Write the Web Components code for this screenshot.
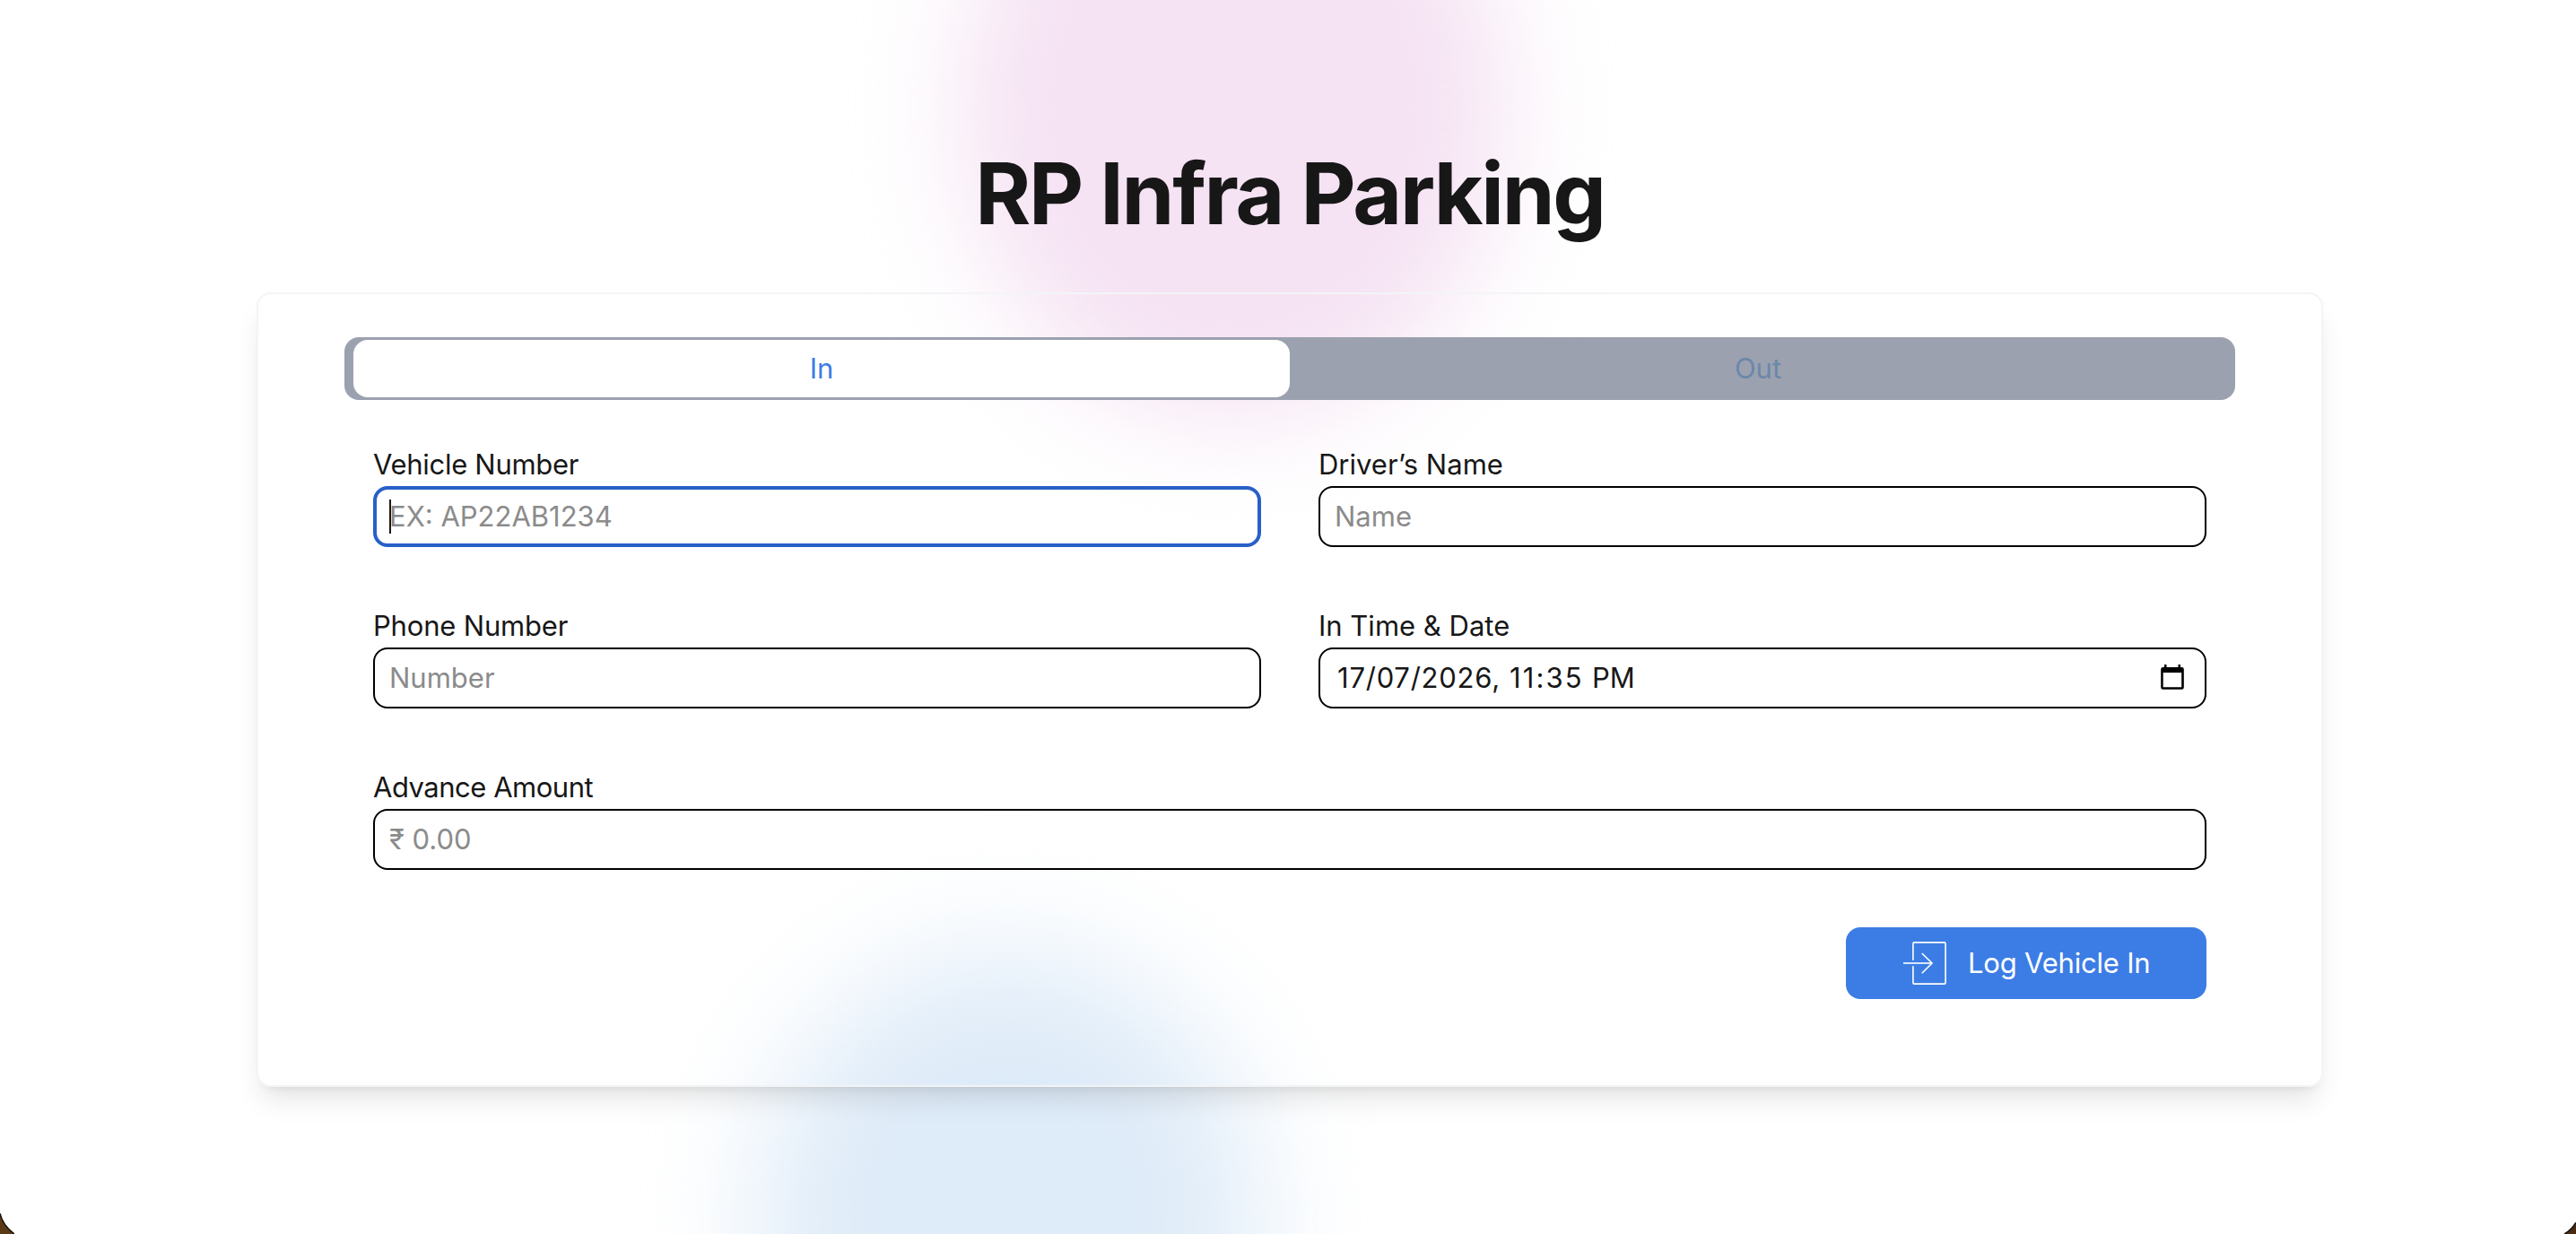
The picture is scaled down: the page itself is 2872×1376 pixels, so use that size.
<!DOCTYPE html>
<html lang="en">
<head>
  <meta charset="utf-8">
  <title>RP Infra Parking</title>
  <style>
    body {
      margin: 0;
      background: #ffffff;
      color: #171717;
      font: 31px/48px Inter, "Liberation Sans", sans-serif;
    }
  </style>
</head>
<body>
  <parking-page heading="RP Infra Parking">
    <parking-card>
      <tab-switch slot="tabs" tabs='["In", "Out"]' active="0"></tab-switch>
      <form-field label="Vehicle Number" placeholder="EX: AP22AB1234" focused style="--label-spacing: -0.3px"></form-field>
      <form-field label="Driver’s Name" placeholder="Name"></form-field>
      <form-field label="Phone Number" placeholder="Number" style="--label-spacing: -0.18px"></form-field>
      <form-field label="In Time &amp; Date"><date-value date="17/07/2026" time="11:35" period="PM"></date-value></form-field>
      <form-field label="Advance Amount" placeholder="₹ 0.00" wide style="--label-spacing: -0.48px"></form-field>
      <log-button slot="actions">Log Vehicle In</log-button>
    </parking-card>
  </parking-page>

  <script>
    class ParkingPage extends HTMLElement {
      constructor() {
        super();
        this.attachShadow({ mode: "open" });
        this.shadowRoot.innerHTML = `
          <style>
            :host {
              display: flex;
              flex-direction: column;
              align-items: center;
              position: relative;
              box-sizing: border-box;
              height: 1376px;
              padding: 168px 0 0 4px;
              overflow: hidden;
              isolation: isolate;
            }
            h1 {
              margin: 0 0 62px;
              font-size: 94.5px;
              line-height: 96px;
              font-weight: 700;
              letter-spacing: -2.2px;
            }
            .glow {
              position: absolute;
              z-index: -1;
              border-radius: 50%;
            }
            .pink {
              left: 1074px;
              top: -220px;
              width: 604px;
              height: 686px;
              background: #f5e2f3;
              filter: blur(60px);
            }
            .blue {
              left: 846px;
              top: 1062px;
              width: 556px;
              height: 600px;
              background: #deebf8;
              filter: blur(66px);
            }
            .corner {
              position: absolute;
              bottom: 0;
              width: 16px;
              height: 23px;
            }
            .left { left: 0; }
            .right { right: 0; width: 13px; height: 13px; }
          </style>
          <div class="glow pink"></div>
          <div class="glow blue"></div>
          <h1></h1>
          <slot></slot>
          <svg class="corner left" viewBox="0 0 16 23">
            <path d="M0 0C2 9 8 17 16 23H0Z" fill="#5d3a17"/>
            <path d="M0 0C2 9 8 17 16 23" fill="none" stroke="#1c150e" stroke-width="1.5"/>
          </svg>
          <svg class="corner right" viewBox="0 0 13 13">
            <path d="M13 0C10 5 5 10 0 13H13Z" fill="#4a2a12"/>
            <path d="M13 0C10 5 5 10 0 13" fill="none" stroke="#1c150e" stroke-width="1.5"/>
          </svg>
        `;
      }

      connectedCallback() {
        this.shadowRoot.querySelector("h1").textContent = this.getAttribute("heading");
      }
    }

    class ParkingCard extends HTMLElement {
      constructor() {
        super();
        this.attachShadow({ mode: "open" });
        this.shadowRoot.innerHTML = `
          <style>
            :host {
              display: block;
              box-sizing: border-box;
              width: 2304px;
              height: 886px;
              padding: 48px 96px 0;
              border: 2px solid #f3f4f6;
              border-radius: 16px;
              box-shadow: 0 20px 30px -6px rgba(0, 0, 0, 0.1), 0 8px 12px -8px rgba(0, 0, 0, 0.1);
            }
            .fields {
              display: grid;
              grid-template-columns: 1fr 1fr;
              gap: 64px;
              padding: 48px 32px 64px;
            }
            .actions {
              display: flex;
              justify-content: flex-end;
              padding: 0 32px;
            }
          </style>
          <slot name="tabs"></slot>
          <div class="fields"><slot></slot></div>
          <div class="actions"><slot name="actions"></slot></div>
        `;
      }
    }

    class TabSwitch extends HTMLElement {
      constructor() {
        super();
        this.attachShadow({ mode: "open" });
        this.shadowRoot.innerHTML = `
          <style>
            :host {
              display: grid;
              grid-auto-flow: column;
              grid-auto-columns: 1fr;
              box-sizing: border-box;
              height: 70px;
              padding: 3px 10px;
              border-radius: 16px;
              background: #9ca1af;
            }
            .tab {
              display: flex;
              align-items: center;
              justify-content: center;
              border-radius: 16px;
              color: #6b88a9;
              cursor: pointer;
            }
            .tab__active {
              background: #ffffff;
              color: #3c7de5;
            }
          </style>
        `;
      }

      connectedCallback() {
        this._active = Number(this.getAttribute("active"));
        JSON.parse(this.getAttribute("tabs")).forEach((label, index) => {
          const tab = document.createElement("div");
          tab.className = "tab";
          tab.textContent = label;
          tab.addEventListener("click", () => this._select(index));
          this.shadowRoot.appendChild(tab);
        });
        this._select(this._active);
      }

      _select(index) {
        this.shadowRoot.querySelectorAll(".tab").forEach((tab, i) => {
          tab.classList.toggle("tab__active", i === index);
        });
      }
    }

    class FormField extends HTMLElement {
      constructor() {
        super();
        this.attachShadow({ mode: "open" });
        this.shadowRoot.innerHTML = `
          <style>
            :host { display: block; }
            :host([wide]) { grid-column: 1 / -1; }
            .label { letter-spacing: var(--label-spacing, 0); }
            .box {
              display: flex;
              align-items: center;
              box-sizing: border-box;
              height: 68px;
              padding: 0 16px;
              border: 2px solid #000000;
              border-radius: 16px;
            }
            .placeholder { color: #8b8b8b; }
            .caret {
              display: none;
              width: 2px;
              height: 38px;
              margin-right: -2px;
              background: #171717;
            }
            :host([focused]) .box {
              padding: 0 14px;
              border: 4px solid #2860c8;
            }
            :host([focused]) .caret { display: block; }
            ::slotted(*) { flex: 1; }
          </style>
          <div class="label"></div>
          <div class="box">
            <span class="caret"></span>
            <span class="placeholder"></span>
            <slot></slot>
          </div>
        `;
      }

      connectedCallback() {
        this.shadowRoot.querySelector(".label").textContent = this.getAttribute("label");
        this.shadowRoot.querySelector(".placeholder").textContent = this.getAttribute("placeholder") || "";
      }
    }

    class DateValue extends HTMLElement {
      constructor() {
        super();
        this.attachShadow({ mode: "open" });
      }

      connectedCallback() {
        this.shadowRoot.innerHTML = `
          <style>
            :host {
              display: flex;
              align-items: center;
              padding: 0 7px 0 3px;
            }
            .date {
              width: 192px;
              letter-spacing: 0.77px;
            }
            .time {
              width: 92px;
              letter-spacing: 2.1px;
            }
            svg {
              width: 26px;
              height: 28px;
              margin: -2px 0 0 auto;
            }
          </style>
          <span class="date">${this.getAttribute("date")},</span>
          <span class="time">${this.getAttribute("time")}</span>
          <span>${this.getAttribute("period")}</span>
          <svg viewBox="0 0 26 28">
            <path d="M4 0h2.5v3h13V0H22v3h1.500a2.300 2.300 0 0 1 2.300 2.300v20.200a2.300 2.300 0 0 1-2.300 2.300h-21A2.300 2.300 0 0 1 .2 25.500V5.300A2.300 2.300 0 0 1 2.500 3H4zM2.700 9v16.300h20.500V9z" fill="#000000" fill-rule="evenodd"/>
          </svg>
        `;
      }
    }

    class LogButton extends HTMLElement {
      constructor() {
        super();
        this.attachShadow({ mode: "open" });
        this.shadowRoot.innerHTML = `
          <style>
            :host {
              display: flex;
              align-items: center;
              gap: 24px;
              box-sizing: border-box;
              width: 402px;
              height: 80px;
              padding: 0 0 0 64px;
              border-radius: 16px;
              background: #3c7de5;
              color: #ffffff;
              letter-spacing: -0.2px;
              white-space: nowrap;
              cursor: pointer;
            }
            svg {
              flex: none;
              width: 48px;
              height: 48px;
            }
          </style>
          <svg viewBox="0 0 48 48" fill="none" stroke="#ffffff" stroke-width="1.600">
            <path d="M10.900 20.800V2.300Q10.900.9 12.300.9H45.700Q47.100.9 47.100 2.300V45.700Q47.100 47.100 45.700 47.100H12.300Q10.900 47.100 10.900 45.700V27.200"/>
            <path d="M0 24H32" stroke-opacity="0.800" stroke-width="2"/>
            <path d="M20.800 13L32 24L20.800 35.200"/>
          </svg>
          <slot></slot>
        `;
      }
    }

    customElements.define("parking-page", ParkingPage);
    customElements.define("parking-card", ParkingCard);
    customElements.define("tab-switch", TabSwitch);
    customElements.define("form-field", FormField);
    customElements.define("date-value", DateValue);
    customElements.define("log-button", LogButton);
  </script>
</body>
</html>
